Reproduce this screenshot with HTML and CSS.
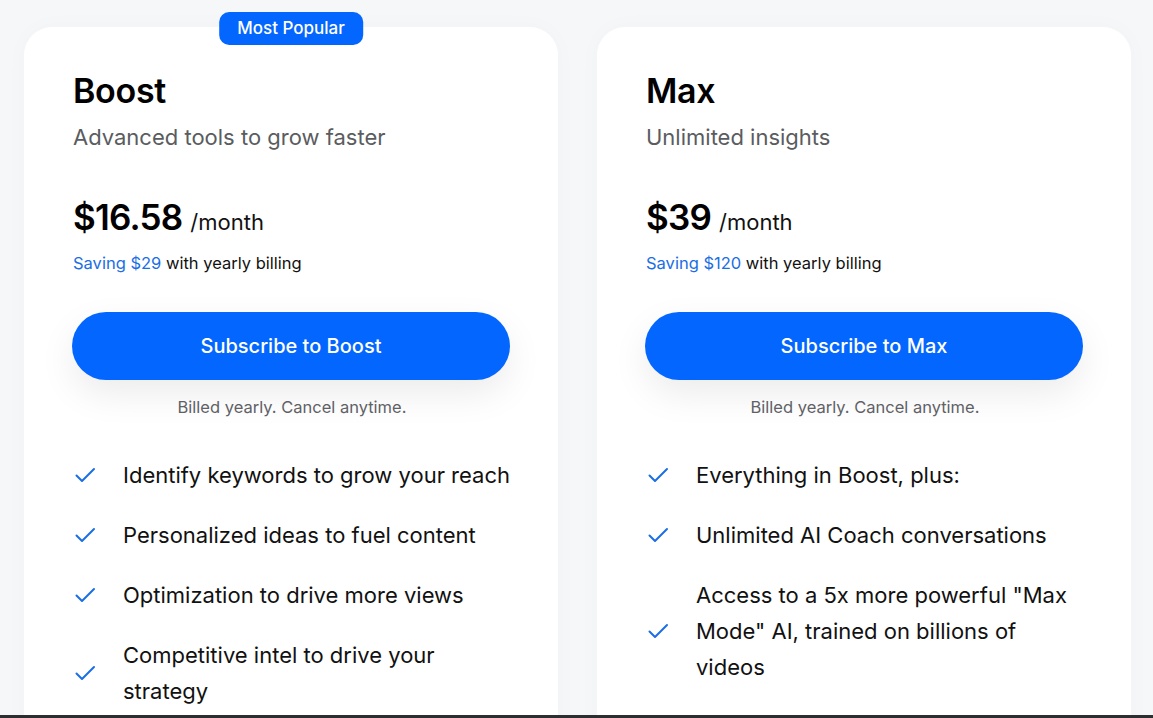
FILE: index.html
```html
<!DOCTYPE html>
<html>
<head>
<meta charset="utf-8">
<link rel="stylesheet" href="styles.css">
</head>
<body>
<main class="plans">
  <section class="card">
    <span class="badge">Most Popular</span>
    <h2 class="name">Boost</h2>
    <p class="tagline">Advanced tools to grow faster</p>
    <div class="price"><span class="amount">$16.58</span> <span class="per">/month</span></div>
    <p class="saving"><span class="save">Saving $29</span> with yearly billing</p>
    <button class="cta">Subscribe to Boost</button>
    <p class="note">Billed yearly. Cancel anytime.</p>
    <ul class="features">
      <li><svg class="check" viewBox="0 0 24 24"><path d="M3.5 12.5l5.5 5.5L21 6"/></svg><span>Identify keywords to grow your reach</span></li>
      <li><svg class="check" viewBox="0 0 24 24"><path d="M3.5 12.5l5.5 5.5L21 6"/></svg><span>Personalized ideas to fuel content</span></li>
      <li><svg class="check" viewBox="0 0 24 24"><path d="M3.5 12.5l5.5 5.5L21 6"/></svg><span>Optimization to drive more views</span></li>
      <li><svg class="check" viewBox="0 0 24 24"><path d="M3.5 12.5l5.5 5.5L21 6"/></svg><span>Competitive intel to drive your strategy</span></li>
    </ul>
  </section>
  <section class="card">
    <h2 class="name">Max</h2>
    <p class="tagline">Unlimited insights</p>
    <div class="price"><span class="amount">$39</span> <span class="per">/month</span></div>
    <p class="saving"><span class="save">Saving $120</span> with yearly billing</p>
    <button class="cta">Subscribe to Max</button>
    <p class="note">Billed yearly. Cancel anytime.</p>
    <ul class="features">
      <li><svg class="check" viewBox="0 0 24 24"><path d="M3.5 12.5l5.5 5.5L21 6"/></svg><span>Everything in Boost, plus:</span></li>
      <li><svg class="check" viewBox="0 0 24 24"><path d="M3.5 12.5l5.5 5.5L21 6"/></svg><span>Unlimited AI Coach conversations</span></li>
      <li><svg class="check" viewBox="0 0 24 24"><path d="M3.5 12.5l5.5 5.5L21 6"/></svg><span>Access to a 5x more powerful "Max Mode" AI, trained on billions of videos</span></li>
    </ul>
  </section>
</main>
<div class="edge"></div>
</body>
</html>
```

FILE: styles.css
```css
* { box-sizing: border-box; }
html, body { margin: 0; padding: 0; }
body {
  height: 718px;
  overflow: hidden;
  display: flex;
  flex-direction: column;
  background: #f6f7f9;
  font-family: "Inter", "Liberation Sans", sans-serif;
  color: #111;
}
.plans {
  flex: 1;
  min-height: 0;
  overflow: hidden;
  display: flex;
  align-items: flex-start;
  gap: 39px;
  padding: 27px 0 0 24px;
}
.card {
  position: relative;
  flex: 0 0 534px;
  min-height: 760px;
  background: #fff;
  border-radius: 28px;
  padding: 44px 47px 0 49px;
  box-shadow: 0 0 24px rgba(0,0,0,0.025);
}
.badge {
  position: absolute;
  top: -15px;
  left: 50%;
  transform: translateX(-50%);
  background: #0366fe;
  color: #fff;
  font-size: 17px;
  font-weight: 500;
  line-height: 33px;
  padding: 0 18px;
  border-radius: 10px;
  white-space: nowrap;
}
.name {
  margin: 0;
  font-size: 34px;
  font-weight: 600;
  line-height: 40px;
  letter-spacing: -0.3px;
  color: #000;
}
.tagline {
  margin: 12px 0 0;
  font-size: 22px;
  line-height: 28px;
  color: #5a5c60;
  font-weight: 400;
}
.price {
  margin-top: 44px;
  display: flex;
  align-items: baseline;
  gap: 8px;
  line-height: 44px;
}
.amount {
  font-size: 35px;
  font-weight: 600;
  letter-spacing: -0.8px;
  color: #000;
}
.per {
  font-size: 22px;
  color: #111;
}
.saving {
  margin: 8px 0 0;
  font-size: 16.5px;
  line-height: 22px;
  color: #111;
}
.save { color: #1a6ee6; }
.cta {
  display: block;
  width: 438px;
  height: 68px;
  margin: 38px 0 0 -1px;
  border: 0;
  border-radius: 34px;
  background: #0366fe;
  color: #fff;
  font-family: inherit;
  font-size: 20px;
  font-weight: 500;
  box-shadow: 0 14px 36px rgba(0,0,0,0.08);
}
.note {
  margin: 16px 0 0;
  text-align: center;
  font-size: 16.5px;
  line-height: 22px;
  color: #5f6166;
}
.features {
  list-style: none;
  margin: 39px 0 0;
  padding: 0;
  display: flex;
  flex-direction: column;
  gap: 24px;
}
.features li {
  display: flex;
  align-items: center;
  gap: 26px;
  font-size: 22px;
  line-height: 36px;
  color: #111;
}
.check {
  flex: 0 0 24px;
  width: 24px;
  height: 24px;
  fill: none;
  stroke: #1a6ee6;
  stroke-width: 2;
  stroke-linecap: round;
  stroke-linejoin: round;
}
.edge {
  flex: 0 0 3px;
  background: #2d2e30;
}
```
